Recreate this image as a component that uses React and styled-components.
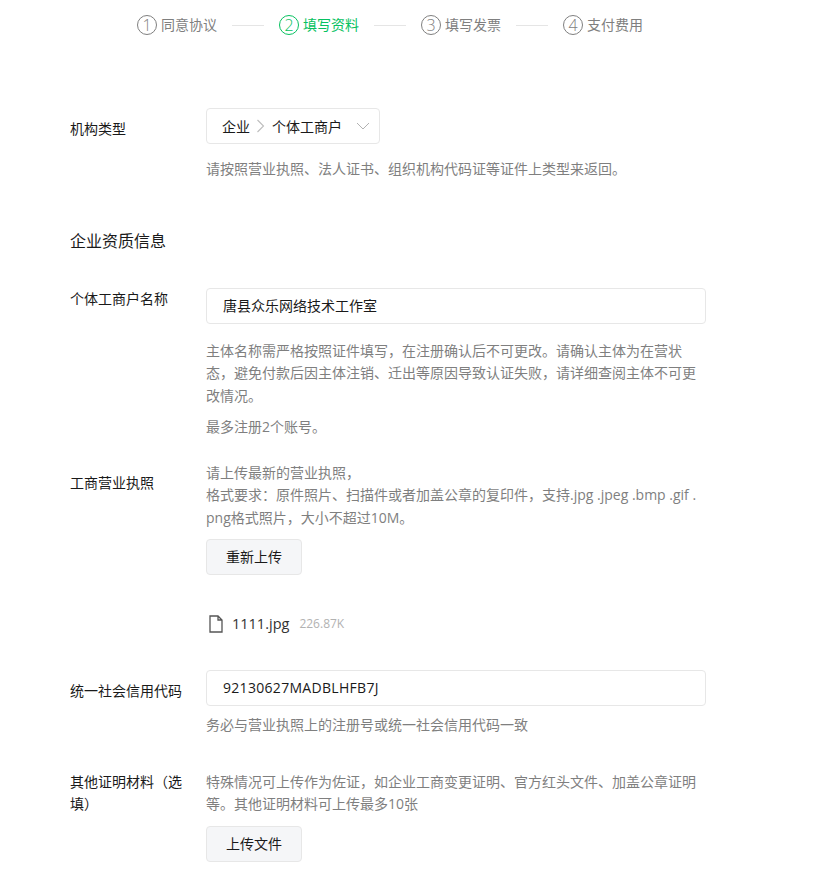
import React from 'react';
import styled, { createGlobalStyle } from 'styled-components';

const Global = createGlobalStyle`
  html, body { margin: 0; background: #fff; }
  body { font-family: "Open Sans", "Noto Sans CJK SC", sans-serif; font-size: 14px; color: #1a1a1a; }
`;
const Page = styled.div`
  width: 825px; height: 870px; overflow: hidden; box-sizing: border-box; padding: 15px 0 0 70px;
`;
const Stepper = styled.div`
  display: flex; align-items: center; height: 20px; margin: 0 0 73px 67px;
`;
const Step = styled.div`
  display: flex; align-items: center; gap: 4px; font-size: 14px; line-height: 20px;
  color: ${p => (p.$active ? '#07c160' : '#7f7f7f')};
`;
const StepNum = styled.span`
  width: 18px; height: 18px; border: 1px solid currentColor; border-radius: 50%;
  display: flex; align-items: center; justify-content: center; font-size: 16px; font-weight: 300;
`;
const StepLine = styled.span`
  width: 32px; height: 1px; background: #e5e5e5; margin: 0 15px;
`;
const Row = styled.div`
  display: flex; align-items: flex-start; margin-bottom: ${p => p.$mb || 0}px;
`;
const Label = styled.div`
  width: 136px; flex: none; box-sizing: border-box; padding-right: 16px; font-size: 14px; line-height: 22px;
  padding-top: ${p => p.$top || 0}px; color: #1a1a1a;
`;
const Control = styled.div`
  width: 500px; flex: none;
`;
const Cascader = styled.div`
  width: 174px; height: 36px; box-sizing: border-box; border: 1px solid #e7e7e7; border-radius: 4px;
  display: flex; align-items: center; padding: 0 9px 0 15px; font-size: 14px; color: #1a1a1a;
`;
const Sep = styled.svg`
  width: 10px; height: 14px; margin: 0 6px; flex: none;
`;
const Chevron = styled.svg`
  width: 14px; height: 8px; margin-left: auto;
`;
const Help = styled.p`
  margin: ${p => p.$mt ?? 14}px 0 0; font-size: 14px; line-height: 22.5px; color: #7f7f7f; word-break: break-all;
`;
const SectionTitle = styled.h2`
  margin: 0 0 35px; font-size: 16px; font-weight: 400; line-height: 24px; color: #1a1a1a;
`;
const Field = styled.div`
  height: 36px; box-sizing: border-box; border: 1px solid #e7e7e7; border-radius: 4px;
  padding: 0 16px 2px; display: flex; align-items: center; font-size: 14px; color: #1a1a1a;
  letter-spacing: ${p => (p.$spaced ? '0.3px' : 'normal')};
`;
const Button = styled.button`
  display: block; width: 96px; height: 36px; box-sizing: border-box; margin-top: ${p => p.$mt || 0}px;
  background: #f5f6f8; border: 1px solid #e7e7e7; border-radius: 4px; font: inherit; font-size: 14px; color: #1a1a1a; padding: 0 0 2px;
`;
const FileRow = styled.div`
  display: flex; align-items: center; margin-top: 38px; height: 22px; line-height: 22px;
`;
const FileIcon = styled.svg`
  width: 16px; height: 18px; margin: 0 8px 0 2px; flex: none;
`;
const FileName = styled.span`
  font-size: 14.5px; color: #333;
`;
const FileSize = styled.span`
  font-size: 12px; color: #b2b2b2; margin-left: 10px;
`;

const steps = ['同意协议', '填写资料', '填写发票', '支付费用'];

export default function App() {
  return (
    <Page>
      <Global />
      <Stepper>
        {steps.map((s, i) => (
          <React.Fragment key={s}>
            {i > 0 && <StepLine />}
            <Step $active={i === 1}><StepNum>{i + 1}</StepNum>{s}</Step>
          </React.Fragment>
        ))}
      </Stepper>
      <Row $mb={48}>
        <Label $top={10}>机构类型</Label>
        <Control>
          <Cascader>
            企业
            <Sep viewBox="0 0 10 14"><path d="M1.5 1 7.5 7l-6 6" fill="none" stroke="#bdbdbd" strokeWidth="1.1" /></Sep>
            个体工商户
            <Chevron viewBox="0 0 14 8"><path d="M1 1l6 6 6-6" fill="none" stroke="#b2b2b2" /></Chevron>
          </Cascader>
          <Help>请按照营业执照、法人证书、组织机构代码证等证件上类型来返回。</Help>
        </Control>
      </Row>
      <SectionTitle>企业资质信息</SectionTitle>
      <Row $mb={23}>
        <Label>个体工商户名称</Label>
        <Control>
          <Field>唐县众乐网络技术工作室</Field>
          <Help $mt={16}>主体名称需严格按照证件填写，在注册确认后不可更改。请确认主体为在营状态，避免付款后因主体注销、迁出等原因导致认证失败，请详细查阅主体不可更改情况。</Help>
          <Help $mt={9}>最多注册2个账号。</Help>
        </Control>
      </Row>
      <Row $mb={35}>
        <Label $top={10}>工商营业执照</Label>
        <Control>
          <Help $mt={0}>请上传最新的营业执照，<br />格式要求：原件照片、扫描件或者加盖公章的复印件，支持.jpg .jpeg .bmp .gif .<br />png格式照片，大小不超过10M。</Help>
          <Button $mt={10}>重新上传</Button>
          <FileRow>
            <FileIcon viewBox="0 0 16 18"><path d="M2 1h8l4 4v12H2zM10 1v4h4" fill="none" stroke="#555" strokeWidth="1.3" /></FileIcon>
            <FileName>1111.jpg</FileName>
            <FileSize>226.87K</FileSize>
          </FileRow>
        </Control>
      </Row>
      <Row $mb={34}>
        <Label $top={10}>统一社会信用代码</Label>
        <Control>
          <Field $spaced>92130627MADBLHFB7J</Field>
          <Help $mt={8}>务必与营业执照上的注册号或统一社会信用代码一致</Help>
        </Control>
      </Row>
      <Row>
        <Label>其他证明材料（选填）</Label>
        <Control>
          <Help $mt={0}>特殊情况可上传作为佐证，如企业工商变更证明、官方红头文件、加盖公章证明等。其他证明材料可上传最多10张</Help>
          <Button $mt={10}>上传文件</Button>
        </Control>
      </Row>
    </Page>
  );
}
